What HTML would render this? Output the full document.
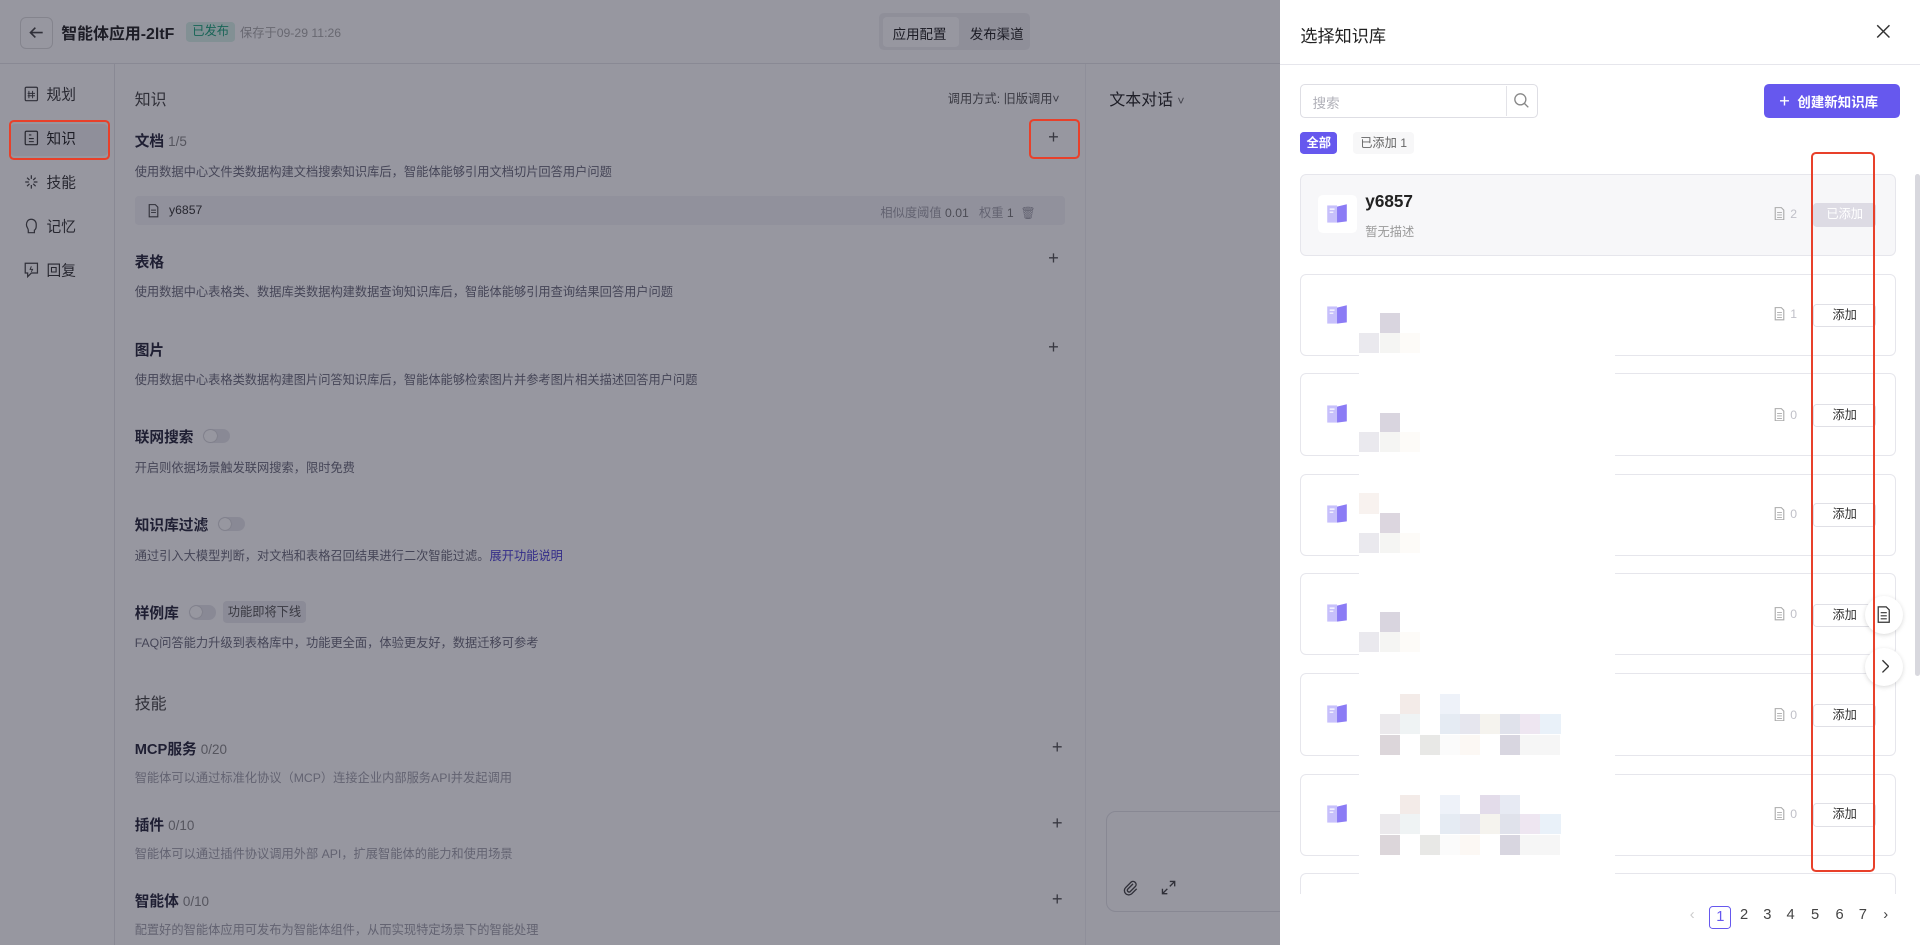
<!DOCTYPE html>
<html><head><meta charset="utf-8">
<style>
*{box-sizing:border-box;margin:0;padding:0}
html,body{width:1920px;height:945px;overflow:hidden;background:#fff}
#w{zoom:1.22449;width:1568px;height:772px;position:relative;font-family:"Liberation Sans","Noto Sans CJK SC",sans-serif;color:#1f1f2e;overflow:hidden}
.a{position:absolute;white-space:nowrap}
.mask{position:absolute;left:0;top:0;width:1045px;height:772px;background:rgba(24,24,44,0.45)}
.h{font-size:12px;font-weight:600;color:#26263a}
.n{font-size:11px;color:#888;font-weight:400}
.d{font-size:10px;color:#6b6b7a}
.g{font-size:10px;color:#a0a0aa}
.plus{font-size:15px;color:#555;font-weight:300}
.tg{width:22px;height:12px;border-radius:6px;background:#e6e6ec;display:inline-block;position:absolute}
.tg:after{content:"";position:absolute;left:1px;top:1px;width:10px;height:10px;border-radius:50%;background:#fff;box-shadow:0 0 1px #999}
.card{position:absolute;left:1062px;width:486px;height:67px;border:1px solid #e6e6ec;border-radius:5px;background:#fff}
.bk{position:absolute;width:18px;height:17px}
.btn{position:absolute;left:1481px;width:51px;height:19px;border:1px solid #e0e0e6;border-radius:3px;font-size:10px;text-align:center;line-height:17px;color:#333;background:#fff}
.cnt{position:absolute;font-size:10px;color:#c0c0c8}
.cnt svg{vertical-align:-2px;margin-right:4px}
.c{position:absolute;width:16.5px;height:16.5px}
.pg{position:absolute;top:741px;font-size:12px;color:#444}
.red{position:absolute;border:2px solid #e8402a;border-radius:4px}
.si{position:absolute;left:20px;font-size:12px;line-height:16px;color:#333}
.si svg{vertical-align:-2px;margin-right:6px}
</style></head><body><div id="w">
<div class="a" style="left:0;top:0;width:1045px;height:52px;border-bottom:1px solid #e5e5ea;background:#fff"></div>
<div class="a" style="left:16px;top:14px;width:27px;height:26px;border:1px solid #ddd;border-radius:5px"></div>
<svg class="a" style="left:23px;top:20px" width="14" height="14" viewBox="0 0 14 14"><path d="M12 7H2M6 3L2 7l4 4" fill="none" stroke="#444" stroke-width="1.3"/></svg>
<div class="a" style="left:50px;top:17px;font-size:13px;font-weight:700;color:#222">智能体应用-2ltF</div>
<div class="a" style="left:152px;top:18px;height:16px;padding:0 5px;background:#d9f3ea;color:#1aa37a;font-size:10px;line-height:16px;border-radius:3px">已发布</div>
<div class="a" style="left:196px;top:19px;font-size:10px;color:#aaa">保存于09-29 11:26</div>
<div class="a" style="left:718px;top:11px;width:123px;height:30px;background:#f0f0f3;border-radius:4px"></div>
<div class="a" style="left:721px;top:14px;width:62px;height:24px;background:#fff;border-radius:3px"></div>
<div class="a" style="left:729px;top:19px;font-size:11px;color:#222">应用配置</div>
<div class="a" style="left:792px;top:19px;font-size:11px;color:#222">发布渠道</div>
<div class="a" style="left:93px;top:52px;width:1px;height:720px;background:#e5e5ea"></div>
<div class="a" style="left:8px;top:101px;width:80px;height:26px;background:#f0f0f4;border-radius:4px"></div>
<div class="si" style="top:70px"><svg width="12" height="13" viewBox="0 0 12 13"><rect x="1" y="1" width="10" height="11" rx="1" fill="none" stroke="#444"/><path d="M4 4v6M7 4v6M3 6h6M3 8h6" stroke="#444" stroke-width=".8"/></svg>规划</div>
<div class="si" style="top:106px;color:#222"><svg width="12" height="13" viewBox="0 0 12 13"><rect x="1" y="1" width="10" height="11" rx="1" fill="none" stroke="#333"/><path d="M4 4h2M4 7h4M4 9.5h4" stroke="#333" stroke-width=".9"/></svg>知识</div>
<div class="si" style="top:142px"><svg width="12" height="13" viewBox="0 0 12 13"><path d="M6 1v3M6 9v3M1 6.5h3M8 6.5h3M2.5 3l2 2M7.5 8l2 2M9.5 3l-2 2M4.5 8l-2 2" stroke="#444" stroke-width="1"/></svg>技能</div>
<div class="si" style="top:178px"><svg width="12" height="13" viewBox="0 0 12 13"><path d="M6 1C3 1 2 3.5 2 5.5c0 2 1.5 3 1.5 4.5V12h5v-2C10 9 10 7.5 10 5.5 10 3 8.5 1 6 1z" fill="none" stroke="#444"/></svg>记忆</div>
<div class="si" style="top:214px"><svg width="12" height="13" viewBox="0 0 12 13"><path d="M1 1h10v8H6l-3 3V9H1z" fill="none" stroke="#444"/><path d="M6 3.5L5 6h2l-1 2" fill="none" stroke="#444" stroke-width=".8"/></svg>回复</div>
<div class="a" style="left:110px;top:71px;font-size:13px;color:#444">知识</div>
<div class="a" style="left:774px;top:73px;font-size:10px;color:#555">调用方式: 旧版调用˅</div>
<div class="a h" style="left:110px;top:106px">文档 <span class="n">1/5</span></div>
<div class="a plus" style="left:856px;top:103px">+</div>
<div class="a d" style="left:110px;top:132px">使用数据中心文件类数据构建文档搜索知识库后，智能体能够引用文档切片回答用户问题</div>
<div class="a" style="left:110px;top:160px;width:760px;height:24px;background:#f4f4f7;border-radius:3px"></div>
<svg class="a" style="left:121px;top:167px" width="9" height="11" viewBox="0 0 9 11"><path d="M1 .5h5l2 2v8H1z" fill="none" stroke="#444" stroke-width=".9"/><path d="M2.5 5h4M2.5 7h4" stroke="#444" stroke-width=".8"/></svg>
<div class="a" style="left:138px;top:166px;font-size:10px;color:#333">y6857</div>
<div class="a g" style="left:719px;top:166px">相似度阈值 <span style="color:#777">0.01</span>&nbsp;&nbsp; 权重 <span style="color:#777">1</span>&nbsp; 🗑</div>
<div class="a h" style="left:110px;top:205px">表格</div><div class="a plus" style="left:856px;top:202px">+</div>
<div class="a d" style="left:110px;top:230px">使用数据中心表格类、数据库类数据构建数据查询知识库后，智能体能够引用查询结果回答用户问题</div>
<div class="a h" style="left:110px;top:277px">图片</div><div class="a plus" style="left:856px;top:274px">+</div>
<div class="a d" style="left:110px;top:302px">使用数据中心表格类数据构建图片问答知识库后，智能体能够检索图片并参考图片相关描述回答用户问题</div>
<div class="a h" style="left:110px;top:348px">联网搜索</div><span class="tg" style="left:166px;top:350px"></span>
<div class="a d" style="left:110px;top:374px">开启则依据场景触发联网搜索，限时免费</div>
<div class="a h" style="left:110px;top:420px">知识库过滤</div><span class="tg" style="left:178px;top:422px"></span>
<div class="a d" style="left:110px;top:446px">通过引入大模型判断，对文档和表格召回结果进行二次智能过滤。<span style="color:#4b3fd6">展开功能说明</span></div>
<div class="a h" style="left:110px;top:492px">样例库</div><span class="tg" style="left:154px;top:494px"></span>
<div class="a" style="left:182px;top:491px;height:18px;padding:0 4px;background:#eaeaee;border-radius:3px;font-size:10px;line-height:18px;color:#555">功能即将下线</div>
<div class="a d" style="left:110px;top:517px">FAQ问答能力升级到表格库中，功能更全面，体验更友好，数据迁移可参考</div>
<div class="a" style="left:110px;top:564px;font-size:13px;color:#444">技能</div>
<div class="a h" style="left:110px;top:603px">MCP服务 <span class="n">0/20</span></div><div class="a plus" style="left:859px;top:601px">+</div>
<div class="a g" style="left:110px;top:627px">智能体可以通过标准化协议（MCP）连接企业内部服务API并发起调用</div>
<div class="a h" style="left:110px;top:665px">插件 <span class="n">0/10</span></div><div class="a plus" style="left:859px;top:663px">+</div>
<div class="a g" style="left:110px;top:689px">智能体可以通过插件协议调用外部 API，扩展智能体的能力和使用场景</div>
<div class="a h" style="left:110px;top:727px">智能体 <span class="n">0/10</span></div><div class="a plus" style="left:859px;top:725px">+</div>
<div class="a g" style="left:110px;top:751px">配置好的智能体应用可发布为智能体组件，从而实现特定场景下的智能处理</div>
<div class="a" style="left:886px;top:52px;width:1px;height:720px;background:#f0f0f4"></div>
<div class="a" style="left:906px;top:71px;font-size:13px;color:#222">文本对话 <span style="font-size:10px;color:#666">˅</span></div>
<div class="a" style="left:903px;top:662px;width:160px;height:83px;border:1px solid #e3e3e8;border-radius:8px;background:#fff"></div>
<svg class="a" style="left:916px;top:718px" width="14" height="14" viewBox="0 0 14 14"><path d="M9 4L4.5 8.5a1.5 1.5 0 002 2L11 6a2.5 2.5 0 00-3.5-3.5L3 7a3.5 3.5 0 005 5l4-4" fill="none" stroke="#444" stroke-width="1.1"/></svg>
<svg class="a" style="left:947px;top:718px" width="14" height="14" viewBox="0 0 14 14"><path d="M8 2h4v4M12 2L8 6M6 12H2V8M2 12l4-4" fill="none" stroke="#444" stroke-width="1.1"/></svg>
<div class="mask"></div>
<div class="red" style="left:7px;top:98px;width:83px;height:33px"></div>
<div class="red" style="left:840px;top:97px;width:42px;height:33px"></div>
<div class="a" style="left:1045px;top:0;width:523px;height:772px;background:#fff"></div>
<div class="a" style="left:1062px;top:18px;font-size:14px;color:#222">选择知识库</div>
<svg class="a" style="left:1532px;top:20px" width="12" height="12" viewBox="0 0 12 12"><path d="M1 1l10 10M11 1L1 11" stroke="#333" stroke-width="1.2"/></svg>
<div class="a" style="left:1045px;top:52px;width:523px;height:1px;background:#e6e6ec"></div>
<div class="a" style="left:1062px;top:69px;width:194px;height:27px;border:1px solid #dedee4;border-radius:4px"></div>
<div class="a" style="left:1230px;top:70px;width:1px;height:25px;background:#e3e3e8"></div>
<div class="a" style="left:1072px;top:75px;font-size:11px;color:#b0b0b8">搜索</div>
<svg class="a" style="left:1236px;top:75px" width="14" height="14" viewBox="0 0 14 14"><circle cx="6" cy="6" r="4.5" fill="none" stroke="#888" stroke-width="1.1"/><path d="M9.3 9.3L12.5 12.5" stroke="#888" stroke-width="1.1"/></svg>
<div class="a" style="left:1441px;top:69px;width:111px;height:27px;background:#6658ee;border-radius:4px;color:#fff;font-size:11px;font-weight:600;line-height:27px;padding-left:12px"><span style="font-size:15px;font-weight:300">+</span>&nbsp;&nbsp;创建新知识库</div>
<div class="a" style="left:1062px;top:108px;width:30px;height:18px;background:#6658ee;border-radius:3px;color:#fff;font-size:10px;font-weight:600;line-height:18px;text-align:center">全部</div>
<div class="a" style="left:1105px;top:108px;width:50px;height:18px;background:#f7f7f8;border-radius:3px;color:#666;font-size:10px;line-height:18px;text-align:center">已添加 1</div>
<div class="card" style="top:142px;background:#f7f7f9"></div>
<div class="a" style="left:1076px;top:159px;width:32px;height:31px;background:#fff;border-radius:4px"></div>
<div class="a" style="left:1115px;top:156px;font-size:14px;font-weight:700;color:#222">y6857</div>
<div class="a" style="left:1115px;top:181px;font-size:10px;color:#999">暂无描述</div>
<div class="btn" style="top:166px;background:#dddbe4;border-color:#dddbe4;color:#fff">已添加</div>
<div class="card" style="top:224px"></div><div class="card" style="top:305px"></div><div class="card" style="top:387px"></div><div class="card" style="top:468px"></div><div class="card" style="top:550px"></div><div class="card" style="top:632px"></div><div class="card" style="top:713px;height:40px;border-bottom:none"></div>
<div class="a" style="left:1050px;top:730px;width:505px;height:42px;background:#fff"></div>
<div class="a" style="left:1110px;top:272px;width:209px;height:458px;background:#fff"></div>
<svg class="bk" style="left:1083px;top:166px" viewBox="0 0 18 17"><path d="M1 2h8v14H1z" fill="#c7c0fb"/><path d="M9 3l8-2v14l-8 1z" fill="#8b7bf5"/><path d="M3 5h4M3 7.5h3" stroke="#fff" stroke-width="1"/></svg>
<svg class="bk" style="left:1083px;top:248px" viewBox="0 0 18 17"><path d="M1 2h8v14H1z" fill="#c7c0fb"/><path d="M9 3l8-2v14l-8 1z" fill="#8b7bf5"/><path d="M3 5h4M3 7.5h3" stroke="#fff" stroke-width="1"/></svg>
<svg class="bk" style="left:1083px;top:329px" viewBox="0 0 18 17"><path d="M1 2h8v14H1z" fill="#c7c0fb"/><path d="M9 3l8-2v14l-8 1z" fill="#8b7bf5"/><path d="M3 5h4M3 7.5h3" stroke="#fff" stroke-width="1"/></svg>
<svg class="bk" style="left:1083px;top:411px" viewBox="0 0 18 17"><path d="M1 2h8v14H1z" fill="#c7c0fb"/><path d="M9 3l8-2v14l-8 1z" fill="#8b7bf5"/><path d="M3 5h4M3 7.5h3" stroke="#fff" stroke-width="1"/></svg>
<svg class="bk" style="left:1083px;top:492px" viewBox="0 0 18 17"><path d="M1 2h8v14H1z" fill="#c7c0fb"/><path d="M9 3l8-2v14l-8 1z" fill="#8b7bf5"/><path d="M3 5h4M3 7.5h3" stroke="#fff" stroke-width="1"/></svg>
<svg class="bk" style="left:1083px;top:574px" viewBox="0 0 18 17"><path d="M1 2h8v14H1z" fill="#c7c0fb"/><path d="M9 3l8-2v14l-8 1z" fill="#8b7bf5"/><path d="M3 5h4M3 7.5h3" stroke="#fff" stroke-width="1"/></svg>
<svg class="bk" style="left:1083px;top:656px" viewBox="0 0 18 17"><path d="M1 2h8v14H1z" fill="#c7c0fb"/><path d="M9 3l8-2v14l-8 1z" fill="#8b7bf5"/><path d="M3 5h4M3 7.5h3" stroke="#fff" stroke-width="1"/></svg>
<div class="cnt" style="left:1449px;top:169px"><svg width="9" height="11" viewBox="0 0 9 11"><path d="M1 .5h5l2 2v8H1z" fill="none" stroke="#aaa" stroke-width=".9"/><path d="M2.5 4.5h4M2.5 6.5h4M2.5 8.5h4" stroke="#aaa" stroke-width=".7"/></svg>2</div>
<div class="cnt" style="left:1449px;top:251px"><svg width="9" height="11" viewBox="0 0 9 11"><path d="M1 .5h5l2 2v8H1z" fill="none" stroke="#aaa" stroke-width=".9"/><path d="M2.5 4.5h4M2.5 6.5h4M2.5 8.5h4" stroke="#aaa" stroke-width=".7"/></svg>1</div><div class="btn" style="top:248px">添加</div>
<div class="cnt" style="left:1449px;top:333px"><svg width="9" height="11" viewBox="0 0 9 11"><path d="M1 .5h5l2 2v8H1z" fill="none" stroke="#aaa" stroke-width=".9"/><path d="M2.5 4.5h4M2.5 6.5h4M2.5 8.5h4" stroke="#aaa" stroke-width=".7"/></svg>0</div><div class="btn" style="top:330px">添加</div>
<div class="cnt" style="left:1449px;top:414px"><svg width="9" height="11" viewBox="0 0 9 11"><path d="M1 .5h5l2 2v8H1z" fill="none" stroke="#aaa" stroke-width=".9"/><path d="M2.5 4.5h4M2.5 6.5h4M2.5 8.5h4" stroke="#aaa" stroke-width=".7"/></svg>0</div><div class="btn" style="top:411px">添加</div>
<div class="cnt" style="left:1449px;top:496px"><svg width="9" height="11" viewBox="0 0 9 11"><path d="M1 .5h5l2 2v8H1z" fill="none" stroke="#aaa" stroke-width=".9"/><path d="M2.5 4.5h4M2.5 6.5h4M2.5 8.5h4" stroke="#aaa" stroke-width=".7"/></svg>0</div><div class="btn" style="top:493px">添加</div>
<div class="cnt" style="left:1449px;top:578px"><svg width="9" height="11" viewBox="0 0 9 11"><path d="M1 .5h5l2 2v8H1z" fill="none" stroke="#aaa" stroke-width=".9"/><path d="M2.5 4.5h4M2.5 6.5h4M2.5 8.5h4" stroke="#aaa" stroke-width=".7"/></svg>0</div><div class="btn" style="top:575px">添加</div>
<div class="cnt" style="left:1449px;top:659px"><svg width="9" height="11" viewBox="0 0 9 11"><path d="M1 .5h5l2 2v8H1z" fill="none" stroke="#aaa" stroke-width=".9"/><path d="M2.5 4.5h4M2.5 6.5h4M2.5 8.5h4" stroke="#aaa" stroke-width=".7"/></svg>0</div><div class="btn" style="top:656px">添加</div>
<div class="c" style="left:1127px;top:256px;background:#d9d5df"></div><div class="c" style="left:1110px;top:272px;background:#eae9ee"></div><div class="c" style="left:1127px;top:272px;background:#f5f5f3"></div><div class="c" style="left:1143px;top:272px;background:#fdfbf8"></div>
<div class="c" style="left:1127px;top:337px;background:#d9d5df"></div><div class="c" style="left:1110px;top:353px;background:#eae9ee"></div><div class="c" style="left:1127px;top:353px;background:#f5f5f3"></div><div class="c" style="left:1143px;top:353px;background:#fdfbf8"></div>
<div class="c" style="left:1110px;top:403px;background:#f8f2ef"></div><div class="c" style="left:1127px;top:419px;background:#dcd6df"></div><div class="c" style="left:1110px;top:435px;background:#eae9ee"></div><div class="c" style="left:1127px;top:435px;background:#f5f5f3"></div><div class="c" style="left:1143px;top:435px;background:#fdfbf8"></div>
<div class="c" style="left:1127px;top:500px;background:#d9d5df"></div><div class="c" style="left:1110px;top:516px;background:#eae9ee"></div><div class="c" style="left:1127px;top:516px;background:#f5f5f3"></div><div class="c" style="left:1143px;top:516px;background:#fdfbf8"></div>
<div class="c" style="left:1143px;top:567px;background:#f3ebe8"></div><div class="c" style="left:1176px;top:567px;background:#eef2f9"></div>
<div class="c" style="left:1127px;top:583px;background:#ebe9ec"></div><div class="c" style="left:1143px;top:583px;background:#eff3f4"></div><div class="c" style="left:1176px;top:583px;background:#e5ebf3"></div><div class="c" style="left:1192px;top:583px;background:#e6e6ee"></div><div class="c" style="left:1209px;top:583px;background:#f5f3ee"></div><div class="c" style="left:1225px;top:583px;background:#e0e2eb"></div><div class="c" style="left:1241px;top:583px;background:#eee6f1"></div><div class="c" style="left:1258px;top:583px;background:#e9f1f9"></div>
<div class="c" style="left:1127px;top:600px;background:#dcd6da"></div><div class="c" style="left:1160px;top:600px;background:#e8e8e6"></div><div class="c" style="left:1176px;top:600px;background:#fbfbfb"></div><div class="c" style="left:1192px;top:600px;background:#fcf8f4"></div><div class="c" style="left:1225px;top:600px;background:#d8d6e0"></div><div class="c" style="left:1241px;top:600px;width:33px;background:#f6f6f6"></div>
<div class="c" style="left:1143px;top:649px;background:#f3ebe8"></div><div class="c" style="left:1176px;top:649px;background:#eef2f9"></div><div class="c" style="left:1209px;top:649px;background:#e3dcea"></div><div class="c" style="left:1225px;top:649px;background:#e7eaf3"></div>
<div class="c" style="left:1127px;top:665px;background:#ebe9ec"></div><div class="c" style="left:1143px;top:665px;background:#eff3f4"></div><div class="c" style="left:1176px;top:665px;background:#e5ebf3"></div><div class="c" style="left:1192px;top:665px;background:#e6e6ee"></div><div class="c" style="left:1209px;top:665px;background:#f5f3ee"></div><div class="c" style="left:1225px;top:665px;background:#e0e2eb"></div><div class="c" style="left:1241px;top:665px;background:#eee6f1"></div><div class="c" style="left:1258px;top:665px;background:#e9f1f9"></div>
<div class="c" style="left:1127px;top:682px;background:#dcd6da"></div><div class="c" style="left:1160px;top:682px;background:#e8e8e6"></div><div class="c" style="left:1176px;top:682px;background:#fbfbfb"></div><div class="c" style="left:1192px;top:682px;background:#fcf8f4"></div><div class="c" style="left:1225px;top:682px;background:#d8d6e0"></div><div class="c" style="left:1241px;top:682px;width:33px;background:#f6f6f6"></div>
<div class="a" style="left:1564px;top:142px;width:4px;height:410px;background:#d8d8de;border-radius:2px"></div>
<div class="a" style="left:1523px;top:487px;width:31px;height:31px;border-radius:50%;background:#fff;box-shadow:0 1px 4px rgba(0,0,0,.15)"></div>
<svg class="a" style="left:1533px;top:495px" width="11" height="14" viewBox="0 0 11 14"><path d="M1 .7h6.5l2.5 2.5V13.3H1z" fill="none" stroke="#333" stroke-width="1"/><path d="M3 5.5h5M3 8h5M3 10.5h5" stroke="#333" stroke-width=".9"/></svg>
<div class="a" style="left:1523px;top:529px;width:31px;height:31px;border-radius:50%;background:#fff;box-shadow:0 1px 4px rgba(0,0,0,.15)"></div>
<svg class="a" style="left:1535px;top:538px" width="8" height="12" viewBox="0 0 8 12"><path d="M2 1l5 5-5 5" fill="none" stroke="#333" stroke-width="1.1"/></svg>
<div class="red" style="left:1479px;top:124px;width:52px;height:588px"></div>
<div class="pg" style="left:1380px;color:#ccc">‹</div>
<div class="a" style="left:1396px;top:740px;width:18px;height:19px;border:1px solid #6658ee;border-radius:3px;color:#6658ee;font-size:12px;text-align:center;line-height:17px">1</div>
<div class="pg" style="left:1421px">2</div><div class="pg" style="left:1440px">3</div><div class="pg" style="left:1459px">4</div><div class="pg" style="left:1479px">5</div><div class="pg" style="left:1499px">6</div><div class="pg" style="left:1518px">7</div><div class="pg" style="left:1538px">›</div>
</div></body></html>
